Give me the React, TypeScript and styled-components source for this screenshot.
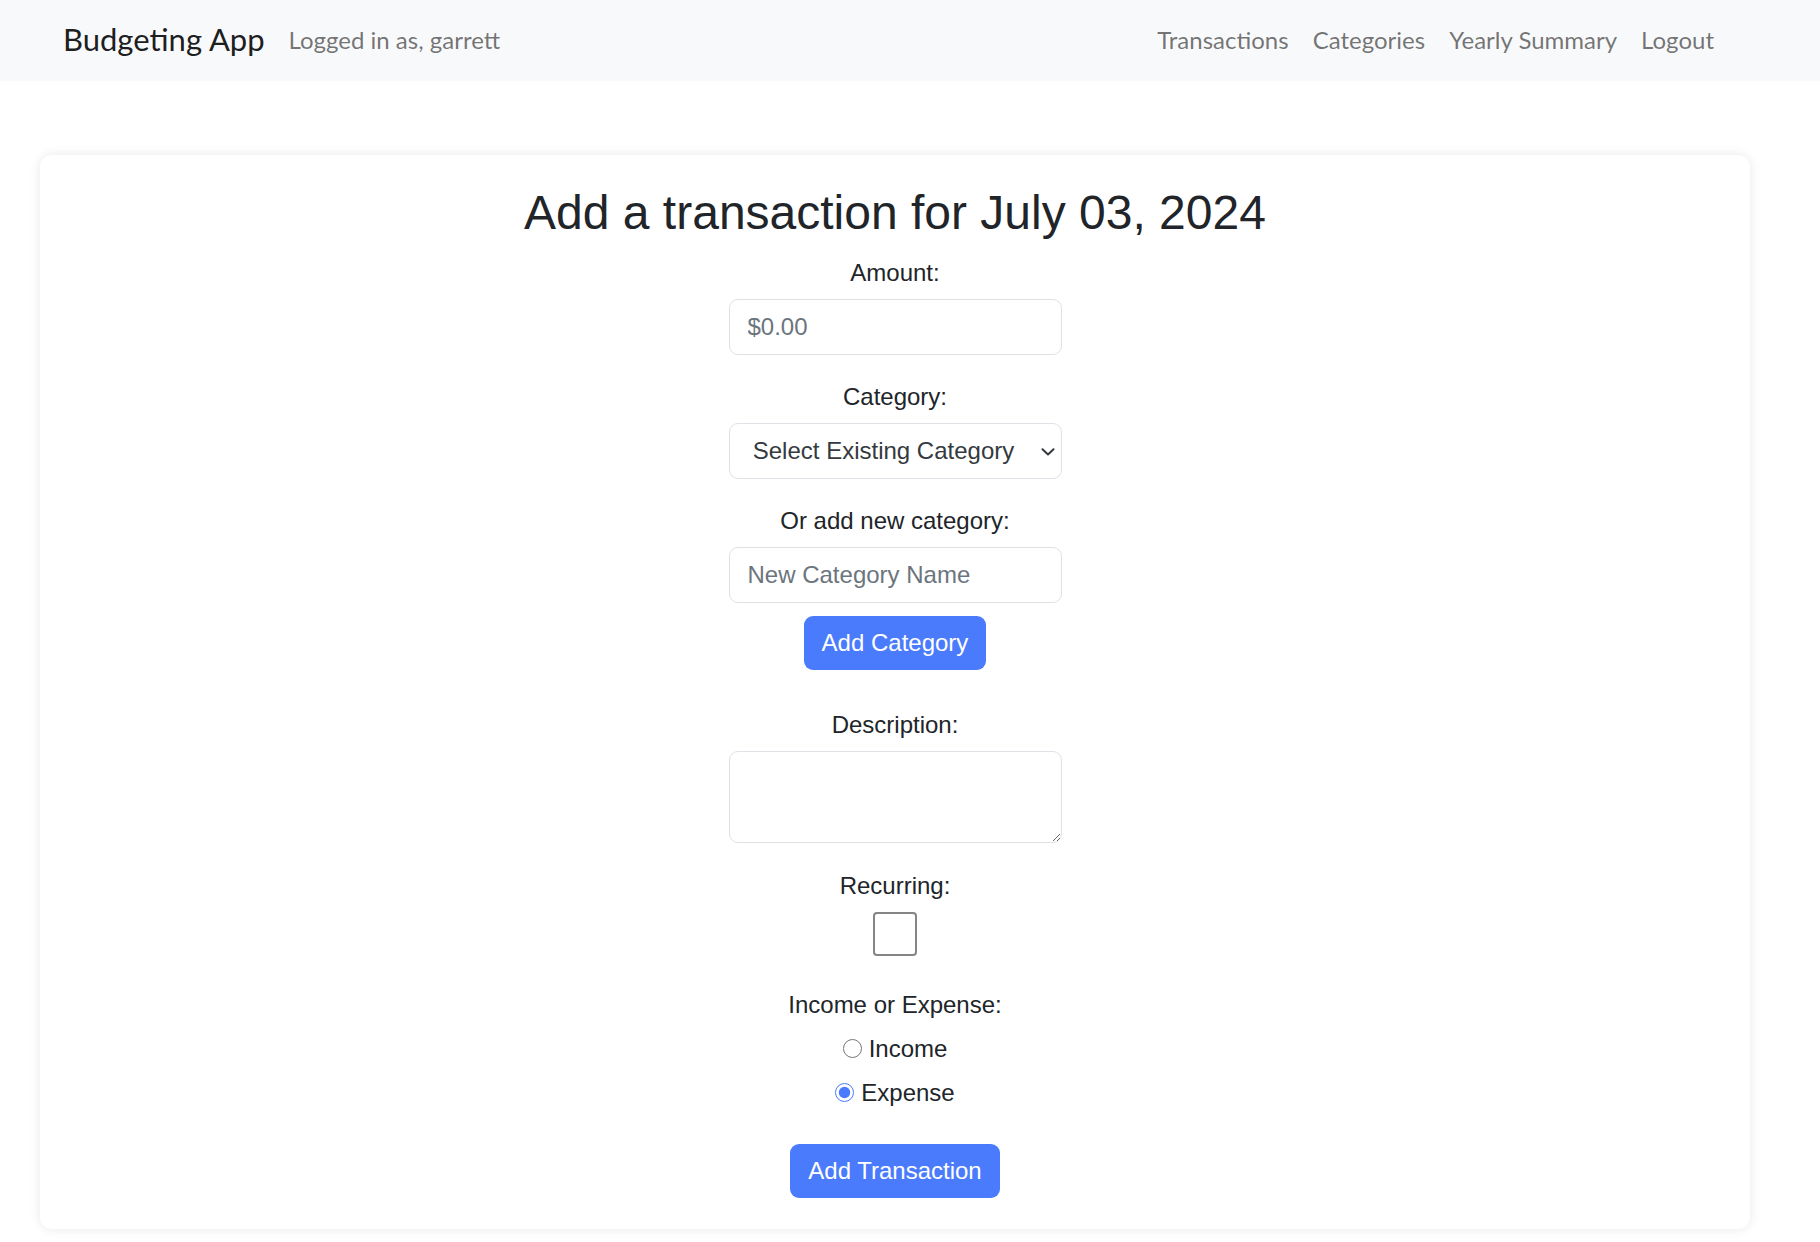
import React from 'react';
import styled, { createGlobalStyle } from 'styled-components';

const GlobalStyle = createGlobalStyle({
  '*, *::before, *::after': {
    boxSizing: 'border-box'
  },
  body: {
    margin: 0,
    background: '#ffffff',
    color: '#212529',
    fontFamily: '"Liberation Sans", Arial, sans-serif'
  }
});

const NavBar = styled.nav({
  display: 'flex',
  alignItems: 'center',
  justifyContent: 'space-between',
  height: '81px',
  padding: '0 94px 0 63px',
  background: '#f8f9fa',
  fontFamily: 'Lato, "Noto Sans", sans-serif'
});

const NavLeft = styled.div({
  display: 'flex',
  alignItems: 'center',
  gap: '24px'
});

const Brand = styled.a({
  fontSize: '31px',
  color: 'rgba(0, 0, 0, 0.9)',
  textDecoration: 'none',
  marginTop: '-3px'
});

const NavText = styled.span({
  fontSize: '24px',
  color: 'rgba(0, 0, 0, 0.55)',
  marginTop: '-2px'
});

const NavLinks = styled.div({
  display: 'flex',
  alignItems: 'center',
  marginTop: '-2px'
});

const NavLink = styled.a({
  fontSize: '24px',
  padding: '0 12px',
  color: 'rgba(0, 0, 0, 0.55)',
  textDecoration: 'none',
  cursor: 'pointer'
});

const Page = styled.main({
  padding: '74px 70px 14px 40px'
});

const Card = styled.section({
  display: 'flex',
  flexDirection: 'column',
  alignItems: 'center',
  padding: '29px 0 31px',
  borderRadius: '12px',
  background: '#fff',
  boxShadow: '0 0 12px rgba(0, 0, 0, 0.09)'
});

const Title = styled.h2({
  margin: '0 0 13px',
  fontSize: '48px',
  fontWeight: 400,
  lineHeight: 1.2
});

const Form = styled.form({
  display: 'flex',
  flexDirection: 'column',
  alignItems: 'center',
  width: '333px'
});

const Group = styled.div<{ $gap?: number }>((props) => ({
  display: 'flex',
  flexDirection: 'column',
  alignItems: 'center',
  width: '100%',
  marginBottom: `${props.$gap ?? 24}px`
}));

const Label = styled.label({
  fontSize: '24px',
  lineHeight: '36px',
  marginBottom: '8px'
});

const TextInput = styled.input({
  width: '100%',
  height: '56px',
  padding: '9px 18px',
  fontSize: '24px',
  fontFamily: 'inherit',
  color: '#212529',
  border: '1px solid #dee2e6',
  borderRadius: '9px',
  outline: 'none',
  '&::placeholder': {
    color: '#6c757d'
  }
});

const SelectWrap = styled.div({
  position: 'relative',
  width: '100%'
});

const Select = styled.select({
  appearance: 'none',
  width: '100%',
  height: '56px',
  padding: '9px 41px 9px 18px',
  fontSize: '24px',
  fontFamily: 'inherit',
  color: '#343a40',
  textAlign: 'center',
  textAlignLast: 'center',
  background: '#fff',
  border: '1px solid #dee2e6',
  borderRadius: '9px',
  outline: 'none'
});

const Chevron = styled.svg({
  position: 'absolute',
  right: '7px',
  top: '50%',
  width: '14px',
  height: '8px',
  marginTop: '-3px',
  pointerEvents: 'none'
});

const TextArea = styled.textarea({
  width: '100%',
  height: '92px',
  padding: '9px 18px',
  fontSize: '24px',
  fontFamily: 'inherit',
  border: '1px solid #dee2e6',
  borderRadius: '9px',
  outline: 'none'
});

const Button = styled.button<{ $top?: number }>((props) => ({
  marginTop: `${props.$top ?? 0}px`,
  padding: '9px 18px',
  fontSize: '24px',
  lineHeight: '36px',
  fontFamily: 'inherit',
  color: '#fff',
  background: '#4a7bfc',
  border: 'none',
  borderRadius: '9px',
  cursor: 'pointer'
}));

const CheckBox = styled.input({
  appearance: 'none',
  margin: 0,
  width: '44px',
  height: '44px',
  border: '2px solid #858585',
  borderRadius: '4px',
  background: '#fff'
});

const RadioRow = styled.label({
  display: 'flex',
  alignItems: 'center',
  gap: '7px',
  fontSize: '24px',
  lineHeight: '36px',
  marginBottom: '8px',
  '&:last-child': {
    marginBottom: 0
  }
});

const Radio = styled.input({
  margin: 0,
  width: '19px',
  height: '19px',
  accentColor: '#4a7bfc'
});

export default function App() {
  return (
    <>
      <GlobalStyle />
      <NavBar>
        <NavLeft>
          <Brand href="#">Budgeting App</Brand>
          <NavText>Logged in as, garrett</NavText>
        </NavLeft>
        <NavLinks>
          <NavLink>Transactions</NavLink>
          <NavLink>Categories</NavLink>
          <NavLink>Yearly Summary</NavLink>
          <NavLink>Logout</NavLink>
        </NavLinks>
      </NavBar>
      <Page>
        <Card>
          <Title>Add a transaction for July 03, 2024</Title>
          <Form onSubmit={(e) => e.preventDefault()}>
            <Group>
              <Label htmlFor="amount">Amount:</Label>
              <TextInput id="amount" placeholder="$0.00" />
            </Group>
            <Group>
              <Label htmlFor="category">Category:</Label>
              <SelectWrap>
                <Select id="category" defaultValue="">
                  <option value="">Select Existing Category</option>
                </Select>
                <Chevron viewBox="0 0 14 8">
                  <path d="M1.5 1.2 7 6.5l5.5-5.3" fill="none" stroke="#343a40" strokeWidth="2" strokeLinecap="round" strokeLinejoin="round" />
                </Chevron>
              </SelectWrap>
            </Group>
            <Group $gap={13}>
              <Label htmlFor="newCategory">Or add new category:</Label>
              <TextInput id="newCategory" placeholder="New Category Name" />
            </Group>
            <Button type="button">Add Category</Button>
            <Group $gap={25} style={{ marginTop: '37px' }}>
              <Label htmlFor="description">Description:</Label>
              <TextArea id="description" />
            </Group>
            <Group $gap={31}>
              <Label htmlFor="recurring">Recurring:</Label>
              <CheckBox id="recurring" type="checkbox" />
            </Group>
            <Group $gap={0}>
              <Label>Income or Expense:</Label>
              <RadioRow>
                <Radio type="radio" name="kind" value="income" />
                Income
              </RadioRow>
              <RadioRow>
                <Radio type="radio" name="kind" value="expense" defaultChecked />
                Expense
              </RadioRow>
            </Group>
            <Button type="submit" $top={33}>Add Transaction</Button>
          </Form>
        </Card>
      </Page>
    </>
  );
}
